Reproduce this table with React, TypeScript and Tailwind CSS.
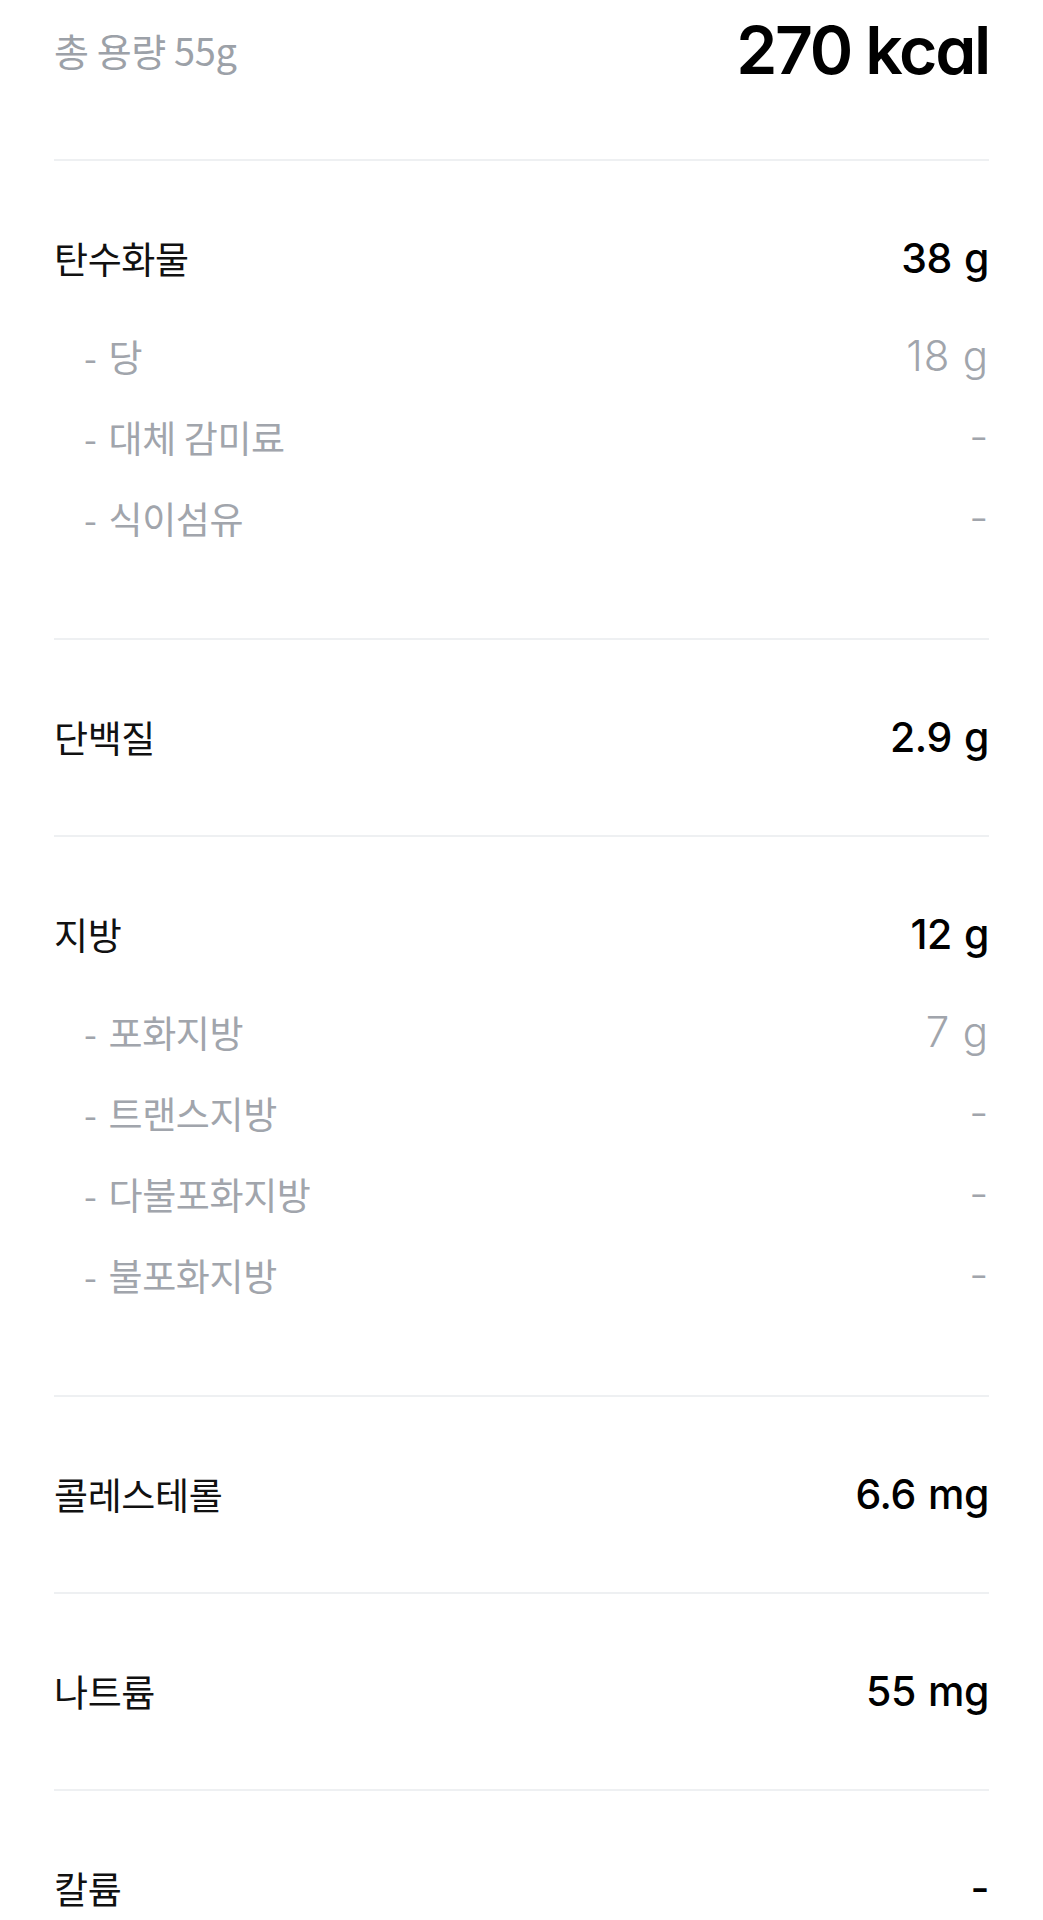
const kr = "font-['Noto_Sans_CJK_KR','Noto_Sans',sans-serif]";
const num = "font-['Inter','Noto_Sans_CJK_KR',sans-serif] [font-feature-settings:'cv11']";

type Sub = { label: string; value: string };
type Section = { label: string; value: string; subs?: Sub[] };

const sections: Section[] = [
  {
    label: '탄수화물',
    value: '38 g',
    subs: [
      { label: '당', value: '18 g' },
      { label: '대체 감미료', value: '-' },
      { label: '식이섬유', value: '-' },
    ],
  },
  { label: '단백질', value: '2.9 g' },
  {
    label: '지방',
    value: '12 g',
    subs: [
      { label: '포화지방', value: '7 g' },
      { label: '트랜스지방', value: '-' },
      { label: '다불포화지방', value: '-' },
      { label: '불포화지방', value: '-' },
    ],
  },
  { label: '콜레스테롤', value: '6.6 mg' },
  { label: '나트륨', value: '55 mg' },
  { label: '칼륨', value: '-' },
];

function NutrientSection({ section }: { section: Section }) {
  const hasSubs = !!section.subs?.length;
  return (
    <div className={`border-t-2 border-[#eef0f2] pt-[73px] ${hasSubs ? 'pb-[96px]' : 'pb-[74px]'}`}>
      {/* main row */}
      <div className="flex h-12 items-center justify-between">
        <span className={`${kr} text-[37px] leading-none tracking-[-0.01em] text-[#111]`}>{section.label}</span>
        <span className={`${num} text-[41px] font-medium leading-none tracking-[-0.01em] [word-spacing:0.04em] text-black`}>
          {section.value}
        </span>
      </div>

      {hasSubs && (
        <div className="mt-[50px] flex flex-col gap-[33px]">
          {section.subs!.map((s) => (
            <div key={s.label} className="flex h-12 items-center justify-between pl-[30px]">
              <span className={`${kr} flex items-center gap-[12px] text-[37px] leading-none tracking-[-0.01em] text-[#a1a5ac]`}>
                <span>-</span>
                <span>{s.label}</span>
              </span>
              <span className={`${num} text-[42px] font-light leading-none tracking-[0.02em] text-[#a1a5ac]`}>
                {s.value}
              </span>
            </div>
          ))}
        </div>
      )}
    </div>
  );
}

export default function App() {
  return (
    <div className="min-h-screen bg-white px-[54px]">
      {/* Header */}
      <div className="flex h-[90px] items-center justify-between pt-[10px]">
        <span className={`${kr} text-[38px] leading-none tracking-[-0.01em] text-[#9ca1a8]`}>총 용량 55g</span>
        <span className={`${num} text-[66px] font-semibold leading-none tracking-[-0.035em] text-black`}>
          270 kcal
        </span>
      </div>

      <div className="mt-[69px] border-t-2 border-[#d9dde1]" />

      <div className="-mt-[2px]">
        {sections.map((s) => (
          <NutrientSection key={s.label} section={s} />
        ))}
      </div>
    </div>
  );
}
